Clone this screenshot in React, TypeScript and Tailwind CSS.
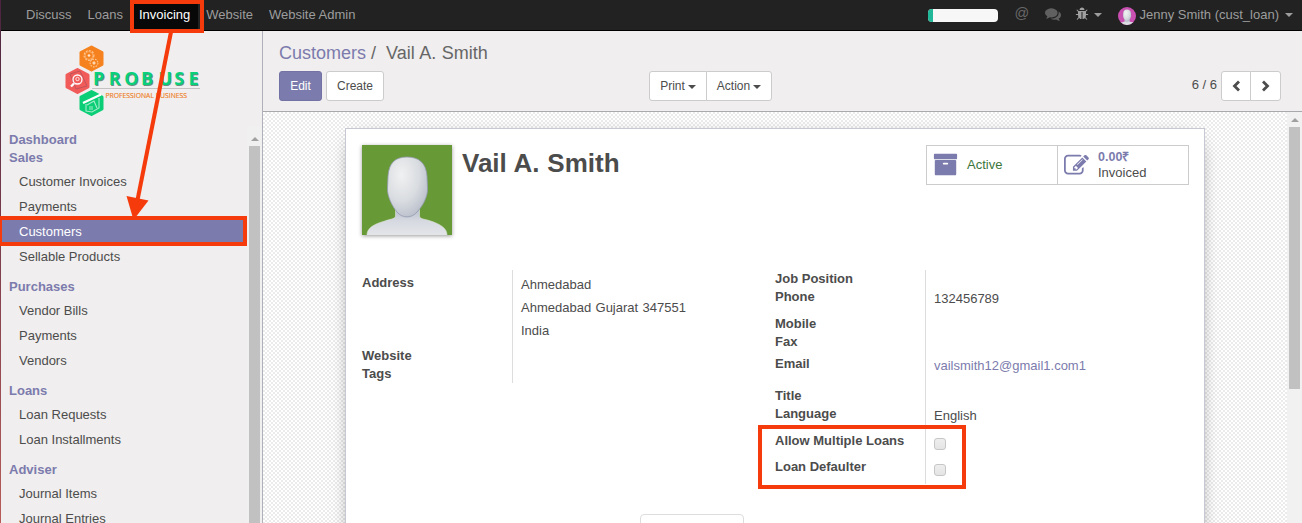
import React from "react";

const ARCHIVE =
  "M1088 832q0-26-19-45t-45-19h-256q-26 0-45 19t-19 45 19 45 45 19h256q26 0 45-19t19-45zm576-192v960q0 26-19 45t-45 19h-1408q-26 0-45-19t-19-45v-960q0-26 19-45t45-19h1408q26 0 45 19t19 45zm64-448v256q0 26-19 45t-45 19h-1536q-26 0-45-19t-19-45v-256q0-26 19-45t45-19h1536q26 0 45 19t19 45z";
const PENCIL =
  "M888 1184l116-116-152-152-116 116v56h96v96h56zm440-720q-16-16-33 1l-350 350q-17 17-1 33t33-1l350-350q17-17 1-33zm80 594v190q0 119-84.5 203.5t-203.5 84.5h-832q-119 0-203.5-84.5t-84.5-203.5v-832q0-119 84.5-203.5t203.5-84.5h832q63 0 117 25 15 7 18 23 3 17-9 29l-49 49q-14 14-32 8-23-6-45-6h-832q-66 0-113 47t-47 113v832q0 66 47 113t113 47h832q66 0 113-47t47-113v-126q0-13 9-22l64-64q15-15 35-7t20 29zm-96-738l288 288-672 672h-288v-288zm444 132l-92 92-288-288 92-92q28-28 68-28t68 28l152 152q28 28 28 68t-28 68z";
const COMMENTS =
  "M1408 768q0 139-94 257t-256.5 186.5-353.5 68.5q-86 0-176-16-124 88-278 128-36 9-86 16h-3q-11 0-20.5-8t-11.5-21q-1-3-1-6.5t.5-6.5 2-6l2.5-5 3.5-5.5 4-5 4.5-5 4-4.5q5-6 23-25t26-29.5 22.5-29 25-38.5 20.5-44q-124-72-195-177t-71-224q0-139 94-257t256.5-186.5 353.5-68.5 353.5 68.5 256.5 186.5 94 257zm384 256q0 120-71 224.5t-195 176.5q10 24 20.5 44t25 38.5 22.5 29 26 29.5 23 25q1 1 4 4.5t4.5 5 4 5 3.5 5.5l2.5 5 2 6 .5 6.5-1 6.5q-3 14-13 22t-22 7q-50-7-86-16-154-40-278-128-90 16-176 16-271 0-472-132 58 4 88 4 161 0 309-45t264-129q125-92 192-212t67-254q0-77-23-152 129 71 204 178t75 230z";
const BUG =
  "M1696 960q0 26-19 45t-45 19h-224q0 171-67 290l208 209q19 19 19 45t-19 45q-18 19-45 19t-45-19l-198-197q-5 5-15 13t-42 28.5-65 36.5-82 29-97 13v-896h-128v896q-51 0-101.5-13.5t-87-33-66-39-43.5-32.5l-15-14-183 207q-20 21-48 21-24 0-43-16-19-18-20.5-44.5t15.5-46.5l202-227q-58-114-58-274h-224q-26 0-45-19t-19-45 19-45 45-19h224v-294l-173-173q-19-19-19-45t19-45 45-19 45 19l173 173h844l173-173q19-19 45-19t45 19 19 45-19 45l-173 173v294h224q26 0 45 19t19 45zm-480-576h-640q0-133 93.5-226.5t226.5-93.5 226.5 93.5 93.5 226.5z";

function Glyph({ d, className }: { d: string; className: string }) {
  return (
    <svg viewBox="0 0 1792 1792" className={`shrink-0 fill-current ${className}`}>
      <path d={d} />
    </svg>
  );
}

function Caret({ className = "" }: { className?: string }) {
  return (
    <span
      className={`inline-block border-x-4 border-t-4 border-x-transparent border-t-current ${className}`}
    />
  );
}

function Avatar({ className, fill, id }: { className: string; fill: string; id: string }) {
  return (
    <svg viewBox="0 0 90 90" className={className}>
      <defs>
        <radialGradient id={`${id}-head`} cx="0.35" cy="0.3" r="0.8">
          <stop offset="0" stopColor="#f0f1f2" />
          <stop offset="0.55" stopColor="#d9dce0" />
          <stop offset="1" stopColor="#b4bac8" />
        </radialGradient>
        <linearGradient id={`${id}-body`} x1="0" y1="0" x2="0" y2="1">
          <stop offset="0" stopColor="#b4bacb" />
          <stop offset="0.5" stopColor="#d6d9e0" />
          <stop offset="1" stopColor="#e3e5e9" />
        </linearGradient>
      </defs>
      <rect width="90" height="90" fill={fill} />
      <path
        d="M33.500 62V71C33.500 74 28 74 23 76C12 79 5 83 5 90H85C85 83 78 79 67 75.500C62 74 57.500 74 57.500 71V62Z"
        fill={`url(#${id}-body)`}
        stroke="#dfe5dc"
        strokeWidth="0.6"
      />
      <path
        d="M45 12C33 12 27 18 26 31L25.500 43C25 51 30 61 35 67C40 73.500 50 73.500 55 67C61 61 66 51 65.500 43L65 31C64 18 57 12 45 12Z"
        fill={`url(#${id}-head)`}
        stroke="#939bb0"
        strokeWidth="0.8"
      />
    </svg>
  );
}

const LETTERS = [
  { c: "P", x: 43.1 },
  { c: "R", x: 58.8 },
  { c: "O", x: 74.2 },
  { c: "B", x: 91.1 },
  { c: "U", x: 108.4 },
  { c: "S", x: 124.2 },
  { c: "E", x: 138.4 },
];

function Logo() {
  return (
    <svg viewBox="0 0 160 90" className="ml-[49px] mt-[5px] h-[90px] w-[160px] shrink-0">
      <g strokeLinejoin="round" strokeWidth="3">
        <path d="M41.500 11L52 16.500V28.500L41.500 34L31 28.500V16.500Z" fill="#f5821e" stroke="#f5821e" />
        <path d="M27.500 33.500L38 39V51L27.500 56.500L17 51V39Z" fill="#f15b59" stroke="#f15b59" />
        <path d="M41.500 55.500L52 61V73L41.500 78.500L31 73V61Z" fill="#0bce76" stroke="#0bce76" />
      </g>
      <g fill="none" stroke="#ffc58d">
        <circle cx="39" cy="19.500" r="4.900" strokeWidth="1.200" strokeDasharray="2 1.200" />
        <circle cx="39" cy="19.500" r="3.900" strokeWidth=".6" />
        <circle cx="39" cy="19.500" r="1.100" fill="#fff" />
        <circle cx="44" cy="27" r="3.900" strokeWidth="1.100" strokeDasharray="1.700 1" />
        <circle cx="44" cy="27" r="1.200" fill="#fff" />
      </g>
      <path d="M20 38L30 35L37 50L26 53Z" fill="none" stroke="#b3535c" strokeWidth=".8" />
      <g fill="none" stroke="#fff">
        <circle cx="27.500" cy="43.500" r="4.500" strokeWidth="1.300" />
        <circle cx="27.500" cy="43" r="1.700" strokeWidth=".8" />
        <path d="M24 47.500L21 50.500" strokeWidth="2.300" />
      </g>
      <path d="M33 67L51 58.500" stroke="#fff" strokeWidth="2.200" />
      <path
        d="M36 68V75L42 76L49 72V62M37 69L44 65L47 72M39 71H43M39 73H43"
        fill="none"
        stroke="#a5eccb"
        strokeWidth="1.100"
      />
      <path d="M42 52.500H150" stroke="#c4c2c2" />
      <g className="font-['Open_Sans',sans-serif] text-[18px] font-bold">
        {LETTERS.map(({ c, x }) => (
          <g key={c}>
            <text x={x + 0.8} y="49.9" fill="#4d7565" opacity=".8">
              {c}
            </text>
            <text x={x} y="48.7" fill="#08d07b">
              {c}
            </text>
          </g>
        ))}
      </g>
      <text
        x="55.500"
        y="62"
        className="font-['Open_Sans',sans-serif] text-[7.3px]"
        fill="#ee7d1d"
        stroke="#ee7d1d"
        strokeWidth=".15"
        textLength="81.500"
        lengthAdjust="spacingAndGlyphs"
      >
        PROFESSIONAL BUSINESS
      </text>
    </svg>
  );
}

const MENU = [
  { title: "Dashboard", items: [] },
  {
    title: "Sales",
    items: ["Customer Invoices", "Payments", "Customers", "Sellable Products"],
  },
  { title: "Purchases", items: ["Vendor Bills", "Payments", "Vendors"] },
  { title: "Loans", items: ["Loan Requests", "Loan Installments"] },
  { title: "Adviser", items: ["Journal Items", "Journal Entries"] },
];

function Sidebar() {
  return (
    <aside className="flex w-[262px] shrink-0 flex-col border-r border-[#afb0ba] bg-[#f0eeee]">
      <Logo />
      <div className="flex min-h-0 grow">
        <nav className="w-[246px] shrink-0 overflow-hidden pt-[5px]">
          {MENU.map((s) => (
            <section key={s.title}>
              <h2 className="h-[18px] pl-2 font-bold leading-[18px] text-[#7c7bad]">{s.title}</h2>
              {s.items.length > 0 && (
                <ul className="mb-[9px] mt-[2px]">
                  {s.items.map((it) => (
                    <li
                      key={it}
                      className={`h-[25px] pl-[18px] leading-[25px] ${
                        it === "Customers" ? "bg-[#7c7bad] text-white" : "text-[#4c4c4c]"
                      }`}
                    >
                      {it}
                    </li>
                  ))}
                </ul>
              )}
            </section>
          ))}
        </nav>
        <div className="flex w-[15px] flex-col items-start bg-[#f1f0f0] pl-[2px] pt-[11px]">
          <span className="ml-[2px] border-x-4 border-b-4 border-x-transparent border-b-[#a0a0a0]" />
          <span className="mt-[5px] w-[11px] grow bg-[#c1c1c1]" />
        </div>
      </div>
    </aside>
  );
}

function TopBar() {
  return (
    <header className="flex h-[31px] shrink-0 items-center border-b border-black bg-[#222] pl-[17px] pr-[9px] text-[#9d9d9d]">
      {["Discuss", "Loans", "Invoicing", "Website", "Website Admin"].map((t) => (
        <a
          key={t}
          className={`flex h-[30px] items-center px-2 ${
            t === "Invoicing" ? "bg-[#080808] text-white" : ""
          }`}
        >
          {t}
        </a>
      ))}
      <div className="ml-auto flex items-center">
        <div className="h-[13px] w-[70px] overflow-hidden rounded bg-[#f7f7f7]">
          <div className="h-full w-[5px] bg-[#21b799]" />
        </div>
        <span className="ml-[17px] w-[15px] -translate-y-[2px] text-[14.5px] leading-none text-[#686868]">@</span>
        <Glyph d={COMMENTS} className="ml-[15px] h-[16px] w-[16px] -translate-y-px text-[#606060]" />
        <Glyph d={BUG} className="ml-[14px] h-[14px] w-[14px] -translate-y-px text-[#a0a0a0]" />
        <Caret className="ml-[5px]" />
        <Avatar id="user" fill="#c94fb1" className="ml-4 mt-px h-[18px] w-[18px] rounded-full" />
        <span className="ml-1">Jenny Smith (cust_loan)</span>
        <Caret className="ml-[6px]" />
      </div>
    </header>
  );
}

const BTN = "flex h-[30px] items-center justify-center text-[12px]";

function ControlPanel() {
  return (
    <div className="flex h-[81px] shrink-0 flex-col border-b border-[#a9a8ab] bg-[#f0eeee] pl-4 pr-[21px] pt-[11px]">
      <div className="h-[22px] whitespace-pre text-[18px] leading-[22px] text-[#666]">
        <span className="text-[#7c7bad]">Customers</span>
        <span> / </span>
        <span className="ml-[5px] [word-spacing:0.5px]">Vail A. Smith</span>
      </div>
      <div className="mt-[7px] grid grid-cols-[370px_1fr_auto]">
        <div className="flex gap-1">
          <button className={`${BTN} w-[43px] rounded-[3px] border border-[#7372a5] bg-[#7c7bad] text-white`}>
            Edit
          </button>
          <button className={`${BTN} w-[58px] rounded-[3px] border border-[#ccc] bg-white`}>Create</button>
        </div>
        <div className="flex">
          <button className={`${BTN} w-[58px] rounded-l-[3px] border border-[#ccc] bg-white`}>
            Print
            <Caret className="ml-[3px] mt-px" />
          </button>
          <button className={`${BTN} -ml-px w-[66px] rounded-r-[3px] border border-[#ccc] bg-white`}>
            Action
            <Caret className="ml-[3px] mt-px" />
          </button>
        </div>
        <div className="flex">
          <span className="mr-[4px] leading-[28px]">6 / 6</span>
          <button className={`${BTN} w-[30px] rounded-l-[3px] border border-[#ccc] bg-white`}>
            <svg viewBox="0 0 12 12" className="h-3 w-3 fill-none stroke-[#4c4c4c] stroke-[2.8]">
              <path d="M9 1.500L4.500 6L9 10.500" />
            </svg>
          </button>
          <button className={`${BTN} -ml-px w-[31px] rounded-r-[3px] border border-[#ccc] bg-white`}>
            <svg viewBox="0 0 12 12" className="h-3 w-3 fill-none stroke-[#4c4c4c] stroke-[2.8]">
              <path d="M3 1.500L7.500 6L3 10.500" />
            </svg>
          </button>
        </div>
      </div>
    </div>
  );
}

function Check() {
  return (
    <span className="block h-3 w-3 rounded-[3px] border border-[#c6c6c6] bg-linear-to-b from-[#eeeeee] to-[#e4e4e4]" />
  );
}

function Field({
  label,
  row,
  labelPad = "",
  valuePad = "",
  children,
}: {
  label: string;
  row: string;
  labelPad?: string;
  valuePad?: string;
  children?: React.ReactNode;
}) {
  return (
    <div className={`flex leading-[18px] ${row}`}>
      <div className={`w-[150px] shrink-0 font-bold ${labelPad}`}>{label}</div>
      <div className={`grow border-l border-[#ddd] pl-2 ${valuePad}`}>{children}</div>
    </div>
  );
}

function Sheet() {
  return (
    <main className="flex h-[420px] w-[860px] flex-col border border-[#c8c8d3] bg-white pl-4 pr-[15px] pt-4 shadow-[0_5px_20px_-12px_#000]">
      <div className="flex">
        <Avatar
          id="partner"
          fill="#689937"
          className="h-[90px] w-[90px] shrink-0 shadow-[0_1px_4px_rgba(0,0,0,0.4)]"
        />
        <h1 className="ml-[10px] mt-[2px] text-[26px] font-bold leading-[32px] [word-spacing:0.5px]">
          Vail A. Smith
        </h1>
        <div className="ml-auto flex h-10 w-[263px] border border-[#ccc]">
          <div className="flex w-[131px] items-center border-r border-[#ccc] pl-[6px]">
            <Glyph d={ARCHIVE} className="h-[25px] w-[25px] -translate-y-px text-[#7c7bad]" />
            <span className="ml-[9px] text-[#3c763d]">Active</span>
          </div>
          <div className="flex items-center pl-[6px]">
            <Glyph d={PENCIL} className="h-[25px] w-[25px] text-[#7c7bad]" />
            <div className="ml-[9px] leading-[15px]">
              <div className="text-[12.5px] font-bold text-[#7c7bad]">0.00₹</div>
              <div>Invoiced</div>
            </div>
          </div>
        </div>
      </div>

      <div className="mt-[35px] flex gap-[15px]">
        <div className="w-[398px]">
          <Field label="Address" row="h-[77px]" labelPad="pt-1" valuePad="pt-[3px]">
            <div className="leading-[23px]">
              <div>Ahmedabad</div>
              <div className="[word-spacing:0.8px]">Ahmedabad Gujarat 347551</div>
              <div>India</div>
            </div>
          </Field>
          <Field label="Website" row="h-[18px]" />
          <Field label="Tags" row="h-[18px]" />
        </div>
        <div className="grow pr-px">
          <Field label="Job Position" row="h-[18px]" />
          <Field label="Phone" row="h-[27px]" valuePad="pt-[2px]">
            132456789
          </Field>
          <Field label="Mobile" row="h-[18px]" />
          <Field label="Fax" row="h-[18px]" />
          <Field label="Email" row="h-[36px]" labelPad="pt-[4px]" valuePad="pt-[6px]">
            <span className="text-[#7c7bad]">vailsmith12@gmail1.com1</span>
          </Field>
          <Field label="Title" row="h-[18px]" />
          <Field label="Language" row="h-[27px]" valuePad="pt-[2px]">
            English
          </Field>
          <Field label="Allow Multiple Loans" row="h-[26px]" valuePad="pt-[6px]">
            <Check />
          </Field>
          <Field label="Loan Defaulter" row="h-[26px]" valuePad="pt-[6px]">
            <Check />
          </Field>
        </div>
      </div>
      <div className="ml-[278px] mt-[30px] h-10 w-[104px] rounded-t border border-[#ddd]" />
    </main>
  );
}

function Annotations() {
  return (
    <div className="pointer-events-none absolute inset-0">
      <div className="absolute left-[130px] top-0 h-[33px] w-[74px] border-4 border-[#f53b0c]" />
      <div className="absolute left-[-2px] top-[216px] h-[30px] w-[249px] border-4 border-[#f53b0c]" />
      <div className="absolute left-[758px] top-[425px] h-[64px] w-[208px] border-4 border-[#f53b0c]" />
      <svg viewBox="0 0 60 190" className="absolute left-[120px] top-[30px] h-[190px] w-[60px]">
        <path d="M51 2L17.500 170" stroke="#f53b0c" strokeWidth="4" />
        <path d="M6.500 166L28.500 170.500L13.500 190Z" fill="#f53b0c" />
      </svg>
    </div>
  );
}

export default function App() {
  return (
    <div className="relative flex h-[523px] w-[1302px] overflow-hidden font-['Liberation_Sans',Arial,sans-serif] text-[13px] text-[#4c4c4c]">
      <div className="w-px shrink-0 bg-linear-to-b from-[#4c2440] to-[#b85c58]" />
      <div className="flex min-w-0 grow flex-col">
        <TopBar />
        <div className="flex min-h-0 grow">
          <Sidebar />
          <div className="flex min-w-0 grow flex-col">
            <ControlPanel />
            <div className="flex min-h-0 grow">
              <div className="flex min-w-0 grow items-start overflow-hidden bg-[repeating-conic-gradient(#ebebeb_0_25%,#fff_0_50%)] bg-[length:4px_4px] pl-[82px] pt-4">
                <Sheet />
              </div>
              <div className="flex w-[15px] shrink-0 flex-col items-center bg-[#f1f1f1] pt-[6px]">
                <span className="border-x-4 border-b-4 border-x-transparent border-b-[#a0a0a0]" />
                <span className="mt-[5px] h-[262px] w-[11px] bg-[#c1c1c1]" />
              </div>
            </div>
          </div>
        </div>
      </div>
      <Annotations />
    </div>
  );
}
